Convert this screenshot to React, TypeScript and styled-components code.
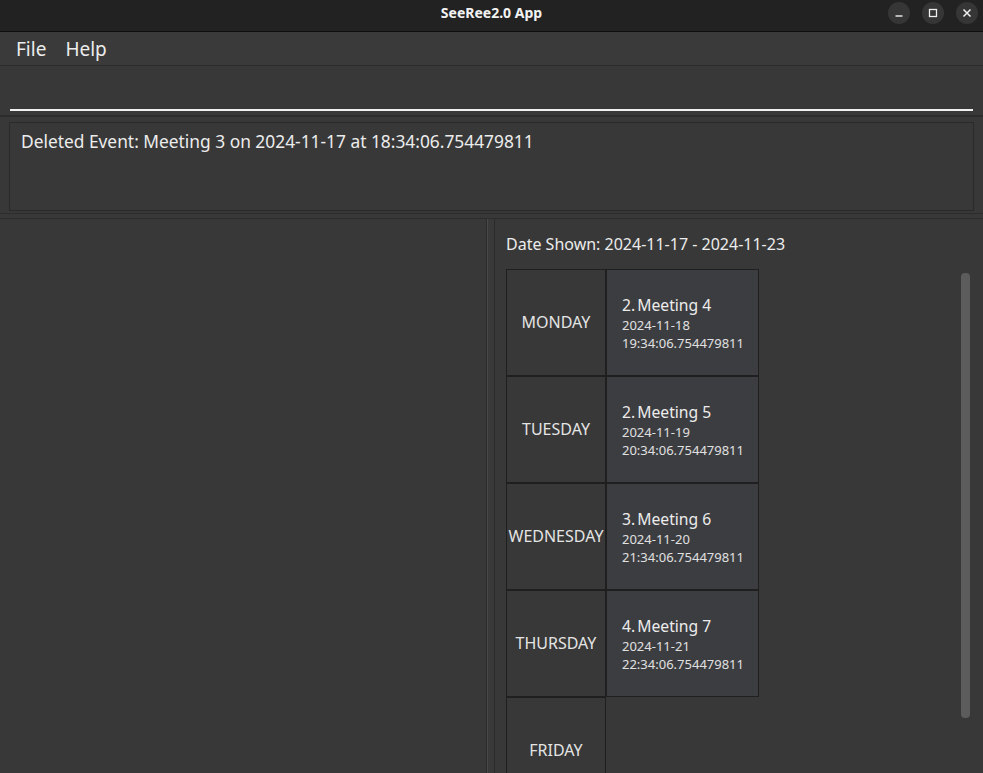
import React from "react";
import styled, { createGlobalStyle } from "styled-components";

const Global = createGlobalStyle`
  html, body { margin: 0; padding: 0; background: #383838; }
  body { font-family: "Noto Sans", "Open Sans", sans-serif; color: #e8e8e8; }
  * { box-sizing: border-box; }
`;

const Window = styled.div`
  width: 983px;
  height: 773px;
  display: flex;
  flex-direction: column;
  overflow: hidden;
  background: #383838;
`;

const TitleBar = styled.div`
  height: 32px;
  flex: none;
  background: #222222;
  border-bottom: 1px solid #0e0e0e;
  display: flex;
  align-items: center;
  justify-content: center;
  position: relative;
`;

const Title = styled.div`
  font-weight: 700;
  font-size: 14px;
  color: #f2f2f2;
  margin-top: -6px;
`;

const WinButtons = styled.div`
  position: absolute;
  right: 5px;
  top: 2px;
  display: flex;
  gap: 12px;
`;

const WinButton = styled.div`
  width: 22px;
  height: 22px;
  border-radius: 50%;
  background: #363636;
  display: flex;
  align-items: center;
  justify-content: center;
`;

const MenuBar = styled.div`
  height: 34px;
  flex: none;
  background: #3a3a3a;
  border-bottom: 1px solid #2c2c2c;
  display: flex;
  align-items: center;
  padding-left: 16px;
  gap: 19px;
`;

const MenuItem = styled.span`
  font-size: 19px;
  color: #ececec;
  line-height: 1;
  margin-top: 2px;
`;

const CommandArea = styled.div`
  height: 51px;
  flex: none;
  padding: 0 10px 0 10px;
  display: flex;
  align-items: flex-end;
  border-bottom: 2px solid #2c2c2c;
`;

const CommandInput = styled.div`
  width: 964px;
  height: 8px;
  margin-bottom: 4px;
  border-bottom: 2px solid #f0f0f0;
`;

const ResultArea = styled.div`
  flex: none;
  height: 97px;
  padding: 5px 9px 0 9px;
  border-bottom: 1px solid #2c2c2c;
`;

const ResultBox = styled.div`
  height: 89px;
  border: 1px solid #2a2a2a;
  padding: 7px 11px;
  font-size: 17.35px;
  color: #ececec;
  line-height: 23px;
`;

const Split = styled.div`
  flex: 1;
  display: flex;
  border-top: 1px solid #2c2c2c;
  margin-top: 4px;
  min-height: 0;
`;

const LeftPanel = styled.div`
  width: 487px;
  flex: none;
  border-right: 1px solid #2a2a2a;
  background: #383838;
`;

const Divider = styled.div`
  width: 8px;
  flex: none;
  background: #393939;
  border-left: 1px solid #4a4a4a;
  border-right: 1px solid #2a2a2a;
`;

const RightPanel = styled.div`
  flex: 1;
  display: flex;
  flex-direction: column;
  padding: 14px 0 0 11px;
  min-width: 0;
`;

const DateShown = styled.div`
  font-size: 16px;
  color: #ececec;
  line-height: 22px;
  height: 36px;
`;

const ScrollArea = styled.div`
  flex: 1;
  display: flex;
  min-height: 0;
`;

const Calendar = styled.div`
  flex: 1;
  display: flex;
  flex-direction: column;
`;

const Row = styled.div`
  display: flex;
  height: 107px;
  flex: none;
`;

const DayCell = styled.div`
  width: 100px;
  height: 107px;
  border: 1px solid #1f1f1f;
  display: flex;
  align-items: center;
  justify-content: center;
  font-size: 16px;
  color: #e4e4e4;
  background: #383838;
  padding-bottom: 1px;
`;

const EventCell = styled.div`
  width: 153px;
  height: 107px;
  border: 1px solid #1f1f1f;
  background: #3c3d40;
  display: flex;
  flex-direction: column;
  justify-content: center;
  padding-left: 15px;
  padding-top: 2px;
`;

const EventTitle = styled.div`
  font-size: 15.7px;
  line-height: 21px;
  color: #ececec;
`;

const Index = styled.span`
  margin-right: 2px;
`;

const EventLine = styled.div`
  font-size: 13px;
  line-height: 18px;
  color: #e0e0e0;
`;

const Track = styled.div`
  width: 22px;
  flex: none;
  padding: 4px 13px 0 0;
`;

const Thumb = styled.div`
  width: 9px;
  height: 445px;
  border-radius: 4px;
  background: #5c5c5c;
`;

type Ev = { idx: number; name: string; date: string; time: string };
const days: { day: string; ev?: Ev }[] = [
  { day: "MONDAY", ev: { idx: 2, name: "Meeting 4", date: "2024-11-18", time: "19:34:06.754479811" } },
  { day: "TUESDAY", ev: { idx: 2, name: "Meeting 5", date: "2024-11-19", time: "20:34:06.754479811" } },
  { day: "WEDNESDAY", ev: { idx: 3, name: "Meeting 6", date: "2024-11-20", time: "21:34:06.754479811" } },
  { day: "THURSDAY", ev: { idx: 4, name: "Meeting 7", date: "2024-11-21", time: "22:34:06.754479811" } },
  { day: "FRIDAY" },
];

export default function App() {
  return (
    <>
      <Global />
      <Window>
        <TitleBar>
          <Title>SeeRee2.0 App</Title>
          <WinButtons>
            <WinButton>
              <svg width="10" height="10" viewBox="0 0 10 10">
                <line x1="1.5" y1="8" x2="8.5" y2="8" stroke="#f0f0f0" strokeWidth="1.4" />
              </svg>
            </WinButton>
            <WinButton>
              <svg width="10" height="10" viewBox="0 0 10 10">
                <rect x="1.5" y="1.5" width="7" height="7" fill="none" stroke="#f0f0f0" strokeWidth="1.3" />
              </svg>
            </WinButton>
            <WinButton>
              <svg width="10" height="10" viewBox="0 0 10 10">
                <path d="M1.5 1.5 L8.5 8.5 M8.5 1.5 L1.5 8.5" stroke="#f0f0f0" strokeWidth="1.5" />
              </svg>
            </WinButton>
          </WinButtons>
        </TitleBar>
        <MenuBar>
          <MenuItem>File</MenuItem>
          <MenuItem>Help</MenuItem>
        </MenuBar>
        <CommandArea>
          <CommandInput />
        </CommandArea>
        <ResultArea>
          <ResultBox>Deleted Event: Meeting 3 on 2024-11-17 at 18:34:06.754479811</ResultBox>
        </ResultArea>
        <Split>
          <LeftPanel />
          <Divider />
          <RightPanel>
            <DateShown>Date Shown: 2024-11-17 - 2024-11-23</DateShown>
            <ScrollArea>
              <Calendar>
                {days.map((d) => (
                  <Row key={d.day}>
                    <DayCell>{d.day}</DayCell>
                    {d.ev && (
                      <EventCell>
                        <EventTitle>
                          <Index>{d.ev.idx}.</Index>
                          {d.ev.name}
                        </EventTitle>
                        <EventLine>{d.ev.date}</EventLine>
                        <EventLine>{d.ev.time}</EventLine>
                      </EventCell>
                    )}
                  </Row>
                ))}
              </Calendar>
              <Track>
                <Thumb />
              </Track>
            </ScrollArea>
          </RightPanel>
        </Split>
      </Window>
    </>
  );
}
